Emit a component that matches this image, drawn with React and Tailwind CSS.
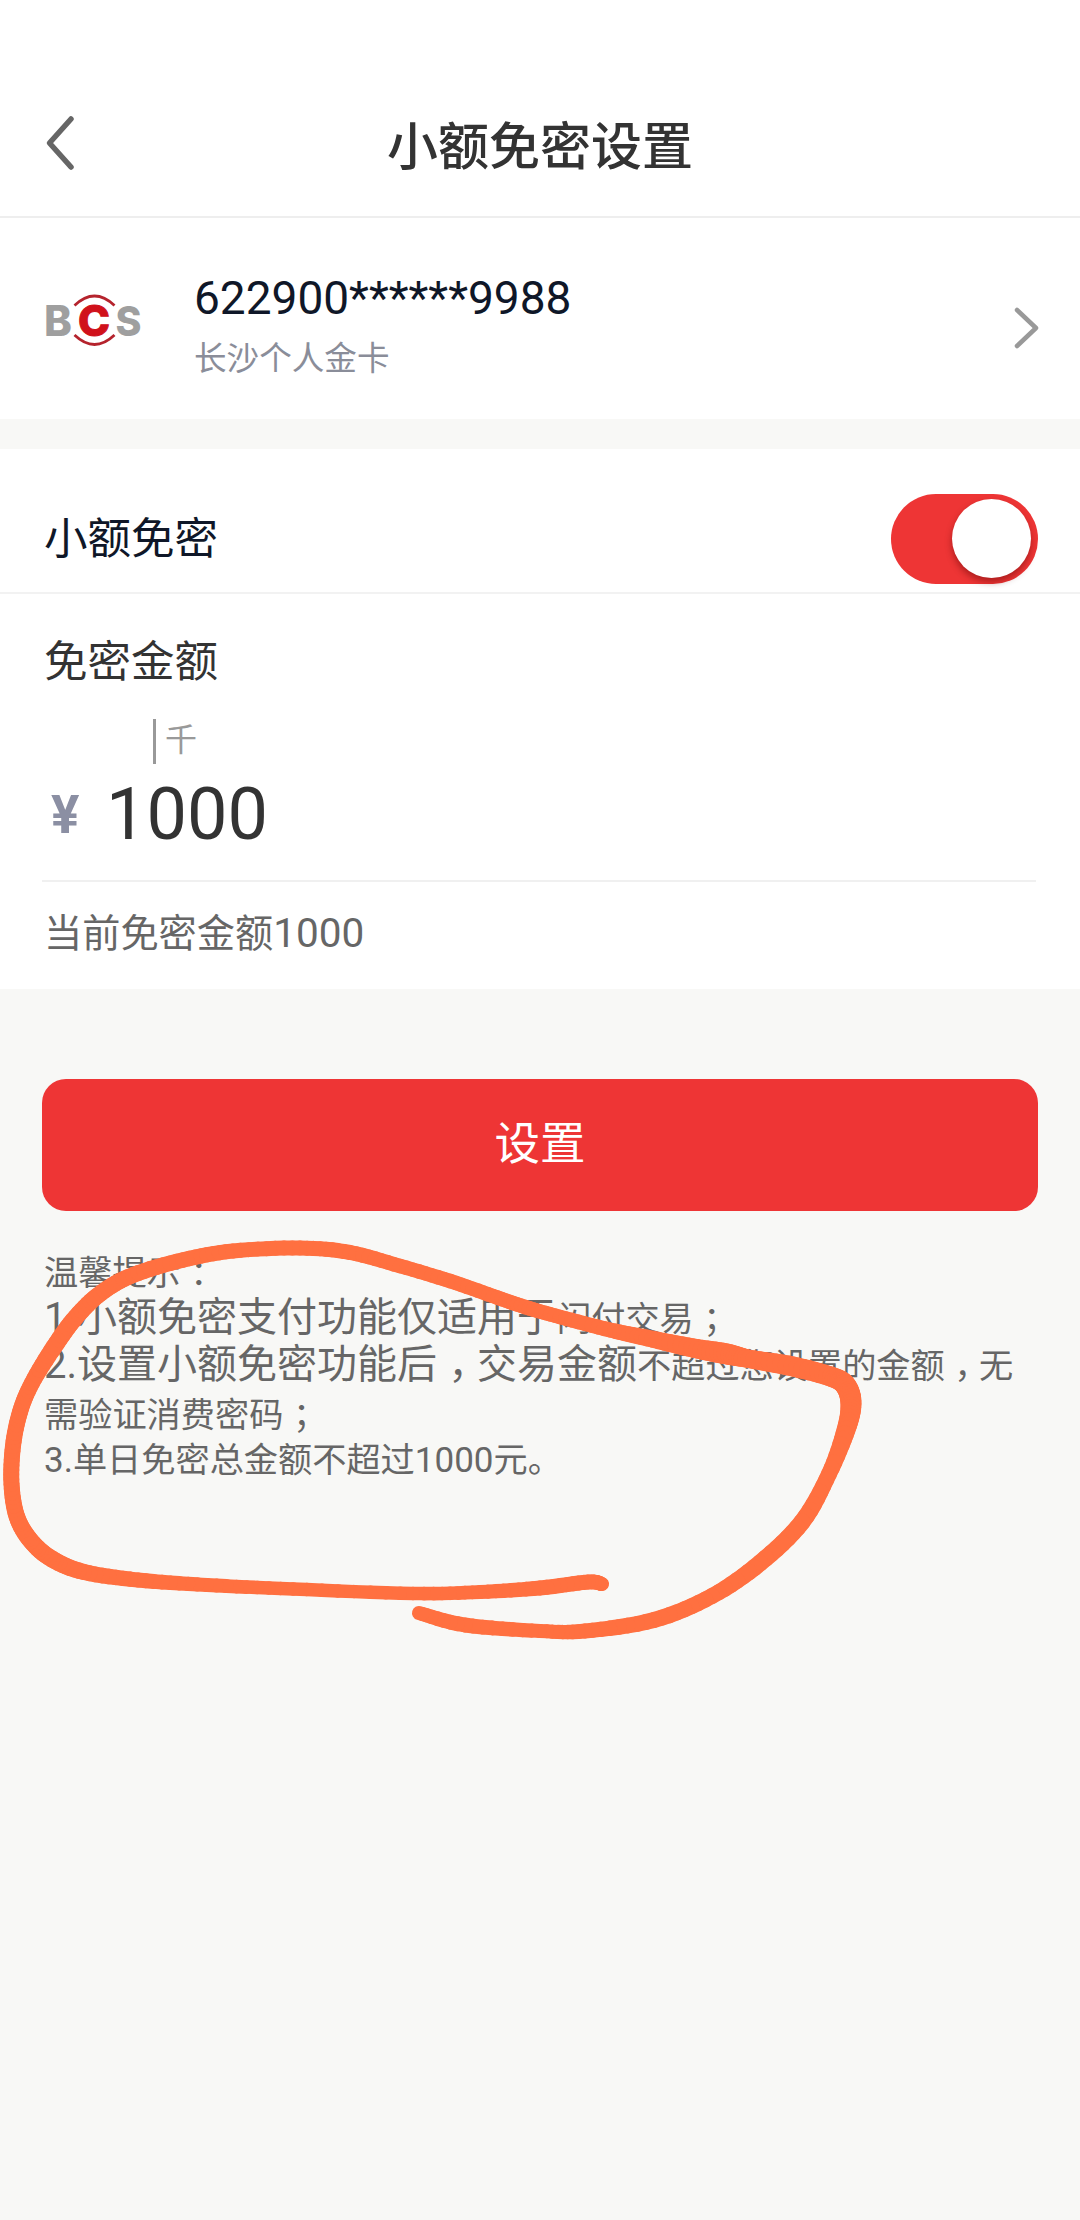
// [x, y, pen width]
const STROKE = [
  [602, 1584, 14], [588, 1582, 15], [540, 1588, 15], [480, 1592, 14], [413, 1593.5, 13.5], [293, 1589, 13.5], [207, 1585, 14],
  [138, 1580, 15], [84, 1572, 16], [52, 1559, 17], [31, 1541, 17], [17, 1517, 16.5], [11.5, 1484, 16], [13, 1446, 16],
  [20, 1412, 16], [32, 1383, 16], [54, 1347, 17], [76, 1317, 17], [101, 1293, 16.5], [133, 1275, 16], [183, 1260, 15.5],
  [233, 1251, 15], [300, 1248, 15], [350, 1252.5, 15], [400, 1266, 14.5], [450, 1281, 14.5], [493, 1296, 14.5],
  [525, 1307, 14.5], [560, 1317, 14.5], [610, 1330, 15], [647, 1338, 16.5], [693, 1348, 19], [727, 1354, 21], [750, 1359, 18.5],
  [793, 1366.5, 20], [832, 1377, 20], [846, 1386, 21], [851, 1404, 21], [846, 1430, 19], [829, 1474, 16],
  [802, 1522, 17], [760, 1563, 17], [712, 1596, 16], [654, 1620, 16], [585, 1631, 15], [540, 1631, 14],
  [465, 1625, 15], [419, 1613, 14],
];

const STEPS = 8;

function spline(a, b, c, d, t) {
  return 0.5 * (2 * b + (c - a) * t + (2 * a - 5 * b + 4 * c - d) * t * t + (3 * b - a - 3 * c + d) * t * t * t);
}

// samples the Catmull-Rom curve so each short piece can carry its own width
function samplePen(points) {
  const out = [];
  for (let i = 0; i < points.length - 1; i++) {
    const p1 = points[i];
    const p2 = points[i + 1];
    const p0 = points[i - 1] || p1;
    const p3 = points[i + 2] || p2;
    for (let s = 0; s < STEPS; s++) {
      out.push([0, 1, 2].map((k) => spline(p0[k], p1[k], p2[k], p3[k], s / STEPS)));
    }
  }
  out.push(points[points.length - 1]);
  return out;
}

const PEN = samplePen(STROKE);

// half-width punctuation padded out to sit in the middle of a full cell
function Mark({ children }) {
  return <span className="inline-block w-[1em] pl-[0.28em] [font-feature-settings:'halt']">{children}</span>;
}

function Header() {
  return (
    <header className="flex h-[218px] items-end border-b-2 border-[#eeeeee] bg-white">
      <div className="grid h-[140px] w-full grid-cols-[120px_1fr_120px] items-center">
        <button type="button" aria-label="返回" className="pl-[44px]">
          <svg width="34" height="56" viewBox="0 0 34 56" fill="none" stroke="#666666" strokeWidth="5.500" strokeLinecap="round" strokeLinejoin="round" className="-mt-[6px]">
            <path d="M27 4 L5.500 28 L27 52" />
          </svg>
        </button>
        <h1 className="pt-[4px] text-center text-[51px] leading-[72px] font-medium text-[#333333]">小额免密设置</h1>
      </div>
    </header>
  );
}

function BankLogo() {
  return (
    <svg width="100" height="56" viewBox="0 0 100 56" className="shrink-0" fontFamily="Inter, sans-serif" fontWeight="800">
      <text x="1" y="45" fontSize="42" fill="#9f9f9f">B</text>
      <text x="35" y="45" fontSize="43" fill="#d0111b" stroke="#d0111b" strokeWidth="1" textLength="32" lengthAdjust="spacingAndGlyphs">C</text>
      <text x="72.500" y="45" fontSize="41" fill="#9f9f9f" textLength="26" lengthAdjust="spacingAndGlyphs">S</text>
      <g fill="none" stroke="#b5232d" strokeWidth="2.800">
        <path d="M31.500 14.500 Q51.500 -4.500 71.500 14.500" />
        <path d="M31.500 44 Q51.500 63 71.500 44" />
      </g>
    </svg>
  );
}

function CardRow() {
  return (
    <section className="flex h-[201px] items-center bg-white pr-[40px] pl-[43px]">
      <BankLogo />
      <div className="ml-[51px] flex flex-1 flex-col pt-[20px]">
        <span className="text-[46px] leading-[61px] text-[#0f1728]">622900******9988</span>
        <span className="text-[32.6px] leading-[61px] text-[#8a8d99]">长沙个人金卡</span>
      </div>
      <svg width="28" height="46" viewBox="0 0 28 46" fill="none" stroke="#999999" strokeWidth="4.500" strokeLinecap="round" strokeLinejoin="round" className="mt-[19px]">
        <path d="M5 5 L24 23 L5 41" />
      </svg>
    </section>
  );
}

function Switch() {
  return (
    <button type="button" role="switch" aria-checked="true" className="flex h-[90px] w-[147px] items-center justify-end rounded-full bg-[#ee3535] pr-[7px]">
      <span className="size-[79px] rounded-full bg-white shadow-[0_4px_7px_rgba(90,0,0,0.45)]" />
    </button>
  );
}

function AmountPanel() {
  return (
    <section className="bg-white">
      <div className="flex h-[145px] items-center justify-between border-b-2 border-[#f2f2f2] pt-[36px] pr-[42px] pl-[44px]">
        <span className="pt-[2px] text-[43.5px] leading-[60px] text-[#0f1728]">小额免密</span>
        <Switch />
      </div>
      <div className="h-[395px] px-[44px] pt-[39px]">
        <div className="text-[43.5px] leading-[60px] text-[#333333]">免密金额</div>
        <div className="mt-[26px] ml-[109px] flex h-[45px] items-center border-l-[3px] border-[#999999] pl-[9px]">
          <span className="-mt-[4px] text-[32px] leading-[40px] text-[#999999]">千</span>
        </div>
        <div className="mt-[11px] flex h-[80px] items-center">
          <span className="w-[60px] pl-[7px] text-[53px] leading-[80px] font-bold text-[#8b8fa3]">¥</span>
          <span className="pl-[2px] text-[72px] leading-[80px] text-[#333333]">1000</span>
        </div>
        <div className="-ml-[2px] mt-[25px] h-[2px] w-[994px] bg-[#f0f0f0]" />
        <div className="mt-[21px] flex items-baseline text-[38.2px] leading-[60px] text-[#666666]">
          <span>当前免密金额</span>
          <span className="text-[40.5px]">1000</span>
        </div>
      </div>
    </section>
  );
}

function Tips() {
  return (
    <div className="pt-[37px] pl-[44px] text-[34.2px] whitespace-nowrap text-[#666666]">
      <p className="h-[45px] leading-[50px]">温馨提示<Mark>：</Mark></p>
      <p className="flex h-[47px] items-baseline leading-[50px]">
        <span className="text-[40px]">1.小额免密支付功能仅适用于</span>
        <span>闪付交易<Mark>；</Mark></span>
      </p>
      <p className="flex h-[50px] items-baseline leading-[50px]">
        <span className="text-[40px]">2.设置小额免密功能后<Mark>，</Mark>交易金额</span>
        <span>不超过您设置的金额<Mark>，</Mark>无</span>
      </p>
      <p className="h-[45px] leading-[50px]">需验证消费密码<Mark>；</Mark></p>
      <p className="flex h-[45px] items-baseline leading-[50px]">
        <span className="text-[35px]">3.</span>
        <span>单日免密总金额不超过</span>
        <span className="text-[35px]">1000</span>
        <span>元。</span>
      </p>
    </div>
  );
}

function Scribble() {
  return (
    <svg className="pointer-events-none absolute top-0 left-0" width="1080" height="2220" viewBox="0 0 1080 2220" stroke="#ff7040" strokeLinecap="round">
      {PEN.slice(1).map(([x, y, w], i) => (
        <line key={i} x1={PEN[i][0]} y1={PEN[i][1]} x2={x} y2={y} strokeWidth={w} />
      ))}
    </svg>
  );
}

export default function App() {
  return (
    <div lang="zh-CN" className="relative h-[2220px] w-[1080px] overflow-hidden bg-[#f8f8f6] font-[Roboto,'Noto_Sans_CJK_SC',sans-serif]">
      <Header />
      <CardRow />
      <div className="h-[30px]" />
      <AmountPanel />
      <div className="px-[42px] pt-[90px]">
        <button type="button" className="h-[132px] w-full rounded-[24px] bg-[#ee3535] text-[45.5px] leading-[60px] text-white">设置</button>
      </div>
      <Tips />
      <Scribble />
    </div>
  );
}
